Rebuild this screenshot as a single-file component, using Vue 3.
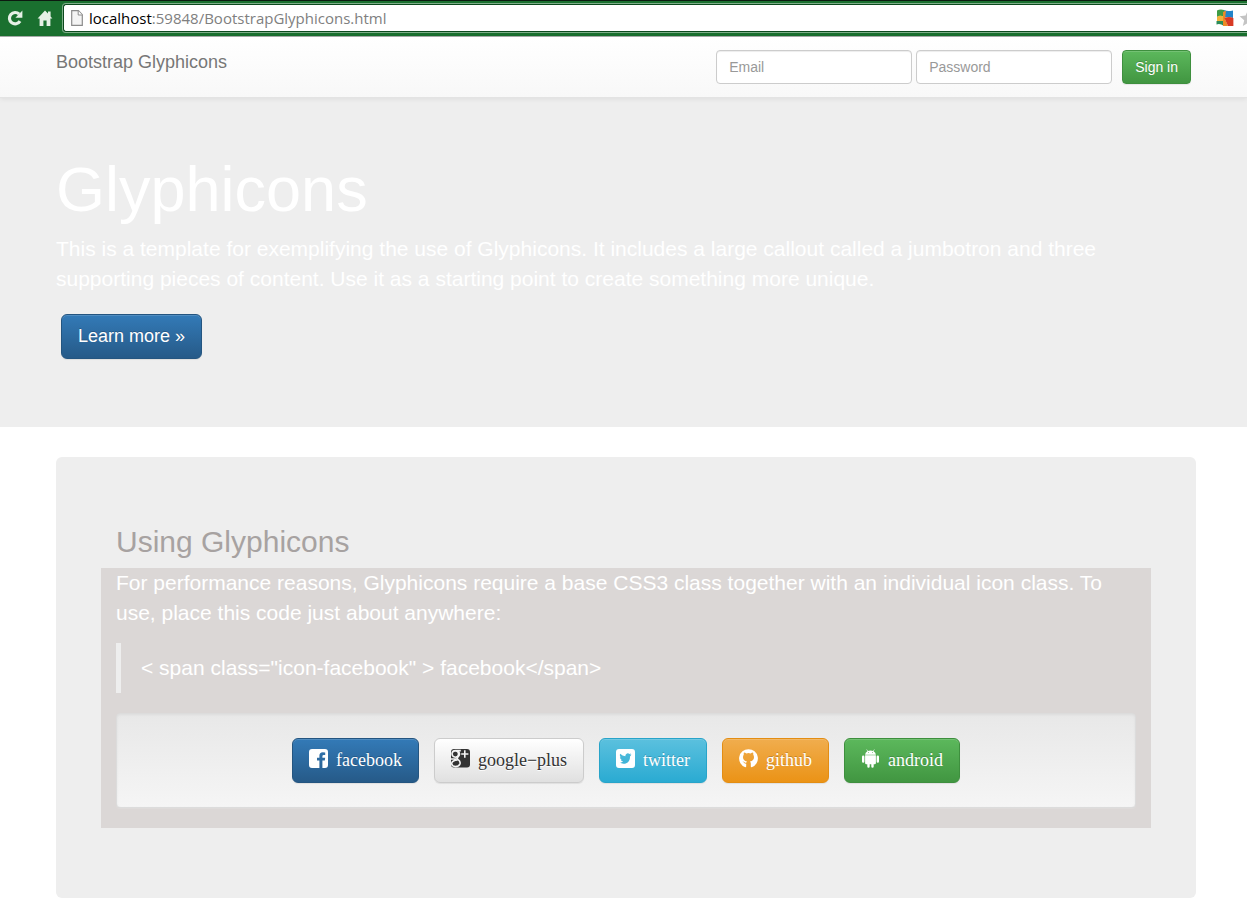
<template>
  <div class="page">
    <div class="browser-bar">
      <button class="tool" type="button" aria-label="Reload">
        <svg width="16" height="16" viewBox="0 0 16 16">
          <path d="M13 11.2A5.7 5.7 0 1 1 12.2 4.2" fill="none" stroke="#e6f0e6" stroke-width="3.2" />
          <path d="M15.4 0.4V7.8H8.4Z" fill="#e6f0e6" />
        </svg>
      </button>
      <button class="tool" type="button" aria-label="Home">
        <svg width="16" height="16" viewBox="0 0 16 16">
          <path d="M8 0.4L0.6 8.4H2.6V16H6.4V10.4H9.6V16H13.4V8.4H15.4L13.6 6.4V1.4H11V3.6Z" fill="#e6f0e6" />
        </svg>
      </button>
      <div class="address">
        <svg class="file" width="12" height="16" viewBox="0 0 12 16">
          <path d="M0.7 0.7H7.4L11.3 4.8V15.3H0.7Z" fill="#f4f4f4" stroke="#8c8c8c" stroke-width="1.2" />
          <path d="M7.2 0.8V5H11.2" fill="#fff" stroke="#8c8c8c" />
        </svg>
        <div class="url"><span class="host">localhost</span>:59848/BootstrapGlyphicons.html</div>
        <svg class="shield" width="18" height="18" viewBox="0 0 18 18">
          <path d="M1 1.5Q4 0 8 1V8Q4 6 1 8Z" fill="#3f9b45" />
          <path d="M1 8Q4 5 8 8V12H1Z" fill="#f2b13a" />
          <path d="M0.5 12H8V17Q4 14 0.5 15.5Z" fill="#2c8c5a" />
          <path d="M8 1Q12 3 17 1.4V9Q12 7 8 9Z" fill="#2384c9" />
          <path d="M7 3L10 1.6L9 10L12 17H7Z" fill="#ed8a26" />
          <path d="M8.4 9Q13 7 17.4 9V17H12Z" fill="#d83a24" />
        </svg>
        <svg class="star" width="18" height="18" viewBox="0 0 18 18">
          <path d="M9 1L11.4 6.6L17.4 7.2L12.8 11.2L14.2 17L9 13.9L3.8 17L5.2 11.2L0.6 7.2L6.6 6.6Z" fill="#c4c4c4" />
        </svg>
      </div>
    </div>

    <nav class="navbar">
      <a class="brand" href="#">Bootstrap Glyphicons</a>
      <form class="login" @submit.prevent>
        <input v-model="email" class="field" type="text" placeholder="Email" aria-label="Email" />
        <input v-model="password" class="field" type="password" placeholder="Password" aria-label="Password" />
        <button class="btn btn-small success" type="submit">Sign in</button>
      </form>
    </nav>

    <header class="hero">
      <h1>Glyphicons</h1>
      <p>
        This is a template for exemplifying the use of Glyphicons. It includes a large callout called a jumbotron and
        three supporting pieces of content. Use it as a starting point to create something more unique.
      </p>
      <a class="btn btn-large primary learn" href="#">Learn more »</a>
    </header>

    <main class="card">
      <h2>Using Glyphicons</h2>
      <section class="panel">
        <p>
          For performance reasons, Glyphicons require a base CSS3 class together with an individual icon class. To use,
          place this code just about anywhere:
        </p>
        <blockquote>{{ sample }}</blockquote>
        <div class="well">
          <button v-for="b in buttons" :key="b.name" type="button" class="btn btn-large social" :class="b.kind">
            <svg class="icon" width="19" height="19" viewBox="0 0 19 19">
              <path :d="b.path" fill="currentColor" fill-rule="evenodd" />
              <path v-if="b.lines" :d="b.lines" fill="none" stroke="#f4f4f4" stroke-width="1.6" />
            </svg>
            <span>{{ b.name }}</span>
          </button>
        </div>
      </section>
    </main>
  </div>
</template>

<script setup>
import { ref } from 'vue'

const email = ref('')
const password = ref('')
const sample = '< span class="icon-facebook" > facebook</span>'

const buttons = [
  {
    name: 'facebook',
    kind: 'primary',
    path: 'M3 0H16Q19 0 19 3V16Q19 19 16 19H13.4V11.6H15.8L16.2 8.8H13.4V7.2Q13.4 6 14.8 6H16.2V3.4Q15 3.2 13.8 3.2Q10.4 3.2 10.4 6.8V8.8H8V11.6H10.4V19H3Q0 19 0 16V3Q0 0 3 0Z',
  },
  {
    name: 'google−plus',
    kind: 'default',
    path: 'M3 0H16Q19 0 19 3V15.5Q19 18.5 16 18.5H3Q0 18.5 0 15.5V3Q0 0 3 0Z',
    // strokes laid over the dark square: the two loops, their link and the plus
    lines:
      'M9.8 1.6H4.4Q1.2 1.8 1 4.8Q1.2 8 4.4 8.2Q7.4 8 7.6 5Q7.4 2.2 4.4 1.7M7 2Q10 5 7 8Q5.2 9.2 7.2 10.6Q9.6 12.2 9 14.8Q8.2 17.6 4.4 17.6Q1 17.4 0.6 14.6Q1 11.4 6.6 11M0 10H5.6M13.8 1.2V8.8M10.2 5H17.4',
  },
  {
    name: 'twitter',
    kind: 'info',
    path: 'M3 0H16Q19 0 19 3V16Q19 19 16 19H3Q0 19 0 16V3Q0 0 3 0ZM15.4 5.5L14 5.9Q14.8 5.3 15 4.4L13.5 5Q12.5 4 11 4.4Q9.2 5.1 9.4 7.2Q6.4 7.1 4.2 4.8Q3.2 7 4.9 8.4L3.9 8.1Q4 10 5.8 10.8H4.8Q5.4 12.3 7.2 12.5Q5.5 13.8 3.6 13.6Q6.4 15.3 9.8 14.4Q14 13 14.1 7.2Q15 6.5 15.4 5.5Z',
  },
  {
    name: 'github',
    kind: 'warning',
    path: 'M9.5 0.2A9.3 9.3 0 0 0 6.4 18.3Q7.2 18.3 7.2 17.6V14.8Q5.8 14.6 5 13.8Q4.6 12.8 3.4 12.4Q4.8 12.2 5.8 13.6Q6.6 14 7.4 13.6Q7.6 12.8 8 12.4Q4 11.8 4 8.2Q4 6.8 4.8 5.8Q4.5 4.6 5 3.4Q6.2 3.4 7.4 4.4Q9.4 3.8 11.6 4.4Q12.8 3.4 14 3.4Q14.5 4.6 14.2 5.8Q15 6.8 15 8.2Q15 11.8 11 12.4Q11.8 13.2 11.8 14.4V17.6Q11.8 18.3 12.6 18.3A9.3 9.3 0 0 0 9.5 0.2Z',
  },
  {
    name: 'android',
    kind: 'success',
    path: 'M5.4 0.4L5.8 0.2L6.9 1.9Q9.5 1.1 12.1 1.9L13.2 0.2L13.6 0.4L12.6 2.2Q14.7 3.4 14.9 5.8H4.1Q4.3 3.4 6.4 2.2ZM7 3.3V4.1H7.8V3.3ZM11.2 3.3V4.1H12V3.3ZM4.1 6.3H14.9V14Q14.9 15.2 13.7 15.2H12.7V17.4Q12.7 18.7 11.5 18.7T10.3 17.4V15.2H8.7V17.4Q8.7 18.7 7.5 18.7T6.3 17.4V15.2H5.3Q4.1 15.2 4.1 14ZM1 7.8Q1 6.6 2.2 6.6T3.4 7.8V12.6Q3.4 13.8 2.2 13.8T1 12.6ZM15.6 7.8Q15.6 6.6 16.8 6.6T18 7.8V12.6Q18 13.8 16.8 13.8T15.6 12.6Z',
  },
]
</script>

<style>
body {
  margin: 0;
  background: #fff;
  overflow-x: hidden;
}
</style>

<style scoped>
* {
  box-sizing: border-box;
}
.page {
  font-family: 'Liberation Sans', Arial, sans-serif;
  font-size: 14px;
  line-height: 20px;
  color: #333;
}
.browser-bar {
  display: flex;
  align-items: center;
  height: 37px;
  padding: 0 0 1px 7px;
  background: #1a702f;
  border-top: 1px solid #0c1a10;
  border-bottom: 1px solid #a9aeab;
}
.tool {
  display: flex;
  width: 16px;
  margin-right: 14px;
  padding: 0;
  border: 0;
  background: none;
}
.address {
  display: flex;
  flex: 1;
  align-items: center;
  height: 28px;
  margin-left: -4px;
  padding-left: 7px;
  border: 1px solid #0c4a1d;
  border-right: 0;
  border-radius: 3px 0 0 3px;
  background: #fff;
  box-shadow: 0 0 0 1px #7fae8a;
  overflow: hidden;
}
.file {
  margin-right: 6px;
}
.url {
  flex: 1;
  color: #808080;
  font-family: 'Open Sans', 'Noto Sans', sans-serif;
  font-size: 15px;
  white-space: nowrap;
}
.host {
  color: #000;
}
.shield {
  margin-right: 5px;
}
.star {
  flex: none;
  margin-right: -10px;
}
.navbar {
  display: flex;
  justify-content: space-between;
  align-items: flex-start;
  position: relative;
  height: 61px;
  padding: 13px 56px 0 56px;
  background: linear-gradient(#fff, #f8f8f8);
  border-bottom: 1px solid #e3e3e3;
  box-shadow: 0 1px 5px rgba(0, 0, 0, 0.075);
}
.brand {
  padding-top: 2px;
  color: #777;
  font-size: 18px;
  text-decoration: none;
  text-shadow: 0 1px 0 rgba(255, 255, 255, 0.25);
}
.login {
  display: flex;
}
.field {
  width: 196px;
  height: 34px;
  margin-right: 4px;
  padding: 6px 12px;
  border: 1px solid #ccc;
  border-radius: 4px;
  background: #fff;
  box-shadow: inset 0 1px 1px rgba(0, 0, 0, 0.075);
  font-family: inherit;
  font-size: 14px;
}
.field::placeholder {
  color: #999;
}
.btn {
  display: inline-flex;
  align-items: center;
  justify-content: center;
  border: 1px solid transparent;
  box-shadow:
    inset 0 1px 0 rgba(255, 255, 255, 0.15),
    0 1px 1px rgba(0, 0, 0, 0.075);
  color: #fff;
  text-decoration: none;
  text-shadow: 0 -1px 0 rgba(0, 0, 0, 0.2);
  white-space: nowrap;
}
.btn-small {
  height: 34px;
  margin-left: 6px;
  padding: 0 12px;
  border-radius: 4px;
  font-family: inherit;
  font-size: 14px;
}
.btn-large {
  height: 45px;
  padding: 0 16px;
  border-radius: 6px;
  font-size: 18px;
}
.primary {
  background: linear-gradient(#337ab7, #265a88);
  border-color: #245580;
}
.default {
  background: linear-gradient(#fff, #e0e0e0);
  border-color: #ccc;
  color: #333;
  text-shadow: 0 1px 0 #fff;
}
.info {
  background: linear-gradient(#5bc0de, #2aabd2);
  border-color: #28a4c9;
}
.warning {
  background: linear-gradient(#f0ad4e, #eb9316);
  border-color: #e38d13;
}
.success {
  background: linear-gradient(#5cb85c, #419641);
  border-color: #3e8f3e;
}
.hero {
  height: 329px;
  padding: 60px 51px 0 56px;
  background: #eee;
  color: #fff;
}
h1 {
  margin: 0 0 13px;
  font-size: 63px;
  font-weight: 400;
  line-height: 63px;
}
p {
  margin: 0 0 15px;
  font-size: 21px;
  line-height: 30px;
}
.learn {
  margin: 5px;
  padding-bottom: 2px;
}
.card {
  margin: 30px 51px 10px 56px;
  padding: 68px 45px 70px;
  border-radius: 6px;
  background: #eee;
}
h2 {
  margin: 0 15px 9px;
  color: #a7a2a1;
  font-size: 30px;
  font-weight: 400;
  line-height: 34px;
}
.panel {
  padding: 0 15px 20px;
  background: #dbd7d6;
  color: #fff;
}
blockquote {
  margin: 0 0 20px;
  padding: 10px 20px;
  border-left: 5px solid #eee;
  font-size: 21px;
  line-height: 30px;
}
.well {
  display: flex;
  flex-wrap: wrap;
  justify-content: center;
  gap: 15px;
  padding: 24px 0;
  border: 1px solid #dcdcdc;
  border-radius: 4px;
  background: linear-gradient(#e8e8e8, #f5f5f5);
  box-shadow:
    inset 0 1px 3px rgba(0, 0, 0, 0.05),
    0 1px 0 rgba(255, 255, 255, 0.1);
}
.social {
  gap: 8px;
  font-family: 'Liberation Serif', 'Times New Roman', serif;
}
.icon {
  margin-bottom: 4px;
}
</style>
